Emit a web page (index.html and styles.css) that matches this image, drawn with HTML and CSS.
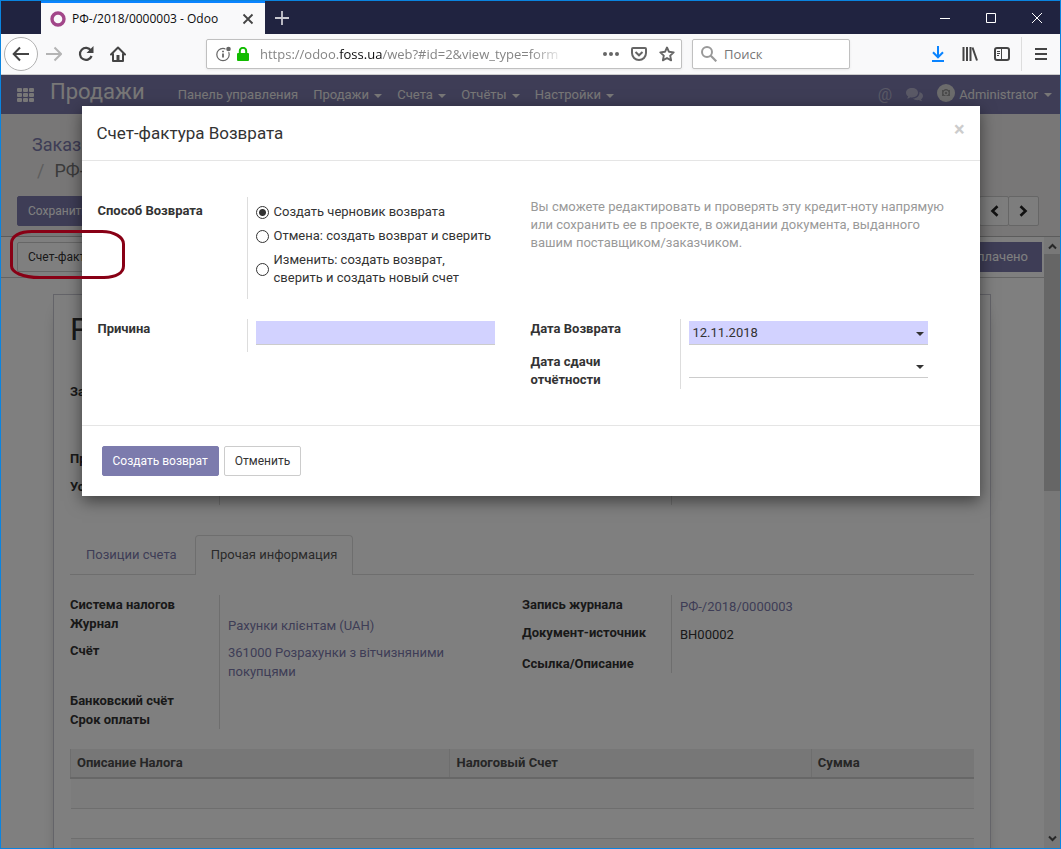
FILE: index.html
```html
<!DOCTYPE html>
<html lang="ru">
<head>
<meta charset="utf-8">
<title>РФ-/2018/0000003 - Odoo</title>
<link rel="stylesheet" href="styles.css">
</head>
<body>
<div class="window">
  <header class="titlebar">
    <div class="tab">
      <svg width="16" height="16" viewBox="0 0 16 16"><circle cx="8" cy="8" r="6" fill="none" stroke="#a24689" stroke-width="3.4"/></svg>
      <span class="tab-title">РФ-/2018/0000003 - Odoo</span>
      <button class="icon-btn" aria-label="Закрыть вкладку"><svg width="12" height="12" viewBox="0 0 12 12"><path d="M1.5 1.5l9 9M10.5 1.5l-9 9" stroke="#444" stroke-width="1.8"/></svg></button>
    </div>
    <button class="icon-btn new-tab" aria-label="Новая вкладка"><svg width="14" height="14" viewBox="0 0 14 14"><path d="M7 0v14M0 7h14" stroke="#c8c8d0" stroke-width="1.8"/></svg></button>
    <div class="win-controls">
      <button class="icon-btn" aria-label="Свернуть"><svg width="10" height="10"><path d="M0 5.5h10" stroke="#fff"/></svg></button>
      <button class="icon-btn" aria-label="Развернуть"><svg width="10" height="10"><path d="M.5.5h9v9h-9z" fill="none" stroke="#fff"/></svg></button>
      <button class="icon-btn" aria-label="Закрыть"><svg width="10" height="10"><path d="M0 0l10 10M10 0L0 10" stroke="#fff"/></svg></button>
    </div>
  </header>

  <div class="toolbar">
    <div class="history">
      <button class="icon-btn back" aria-label="Назад"><svg width="18" height="16" viewBox="0 0 18 16"><path d="M17 8H2M8 1.5L1.7 8 8 14.5" fill="none" stroke="#444" stroke-width="2"/></svg></button>
      <button class="icon-btn" aria-label="Вперёд"><svg width="16" height="16" viewBox="0 0 16 16"><path d="M0 8h14M8.5 1.5L15 8l-6.500 6.500" fill="none" stroke="#b4b4b4" stroke-width="2"/></svg></button>
      <button class="icon-btn" aria-label="Обновить"><svg width="16" height="16" viewBox="0 0 16 16"><path d="M13 4.600A6 6 0 1 0 13.600 10" fill="none" stroke="#444" stroke-width="2.200"/><path d="M15.500 0v7H8.500z" fill="#444"/></svg></button>
      <button class="icon-btn" aria-label="Домой"><svg width="16" height="16" viewBox="0 0 16 16"><path d="M1 8.500L8 1.500l7 7M3 7.500V15h10V7.500" fill="none" stroke="#444" stroke-width="2" stroke-linejoin="round" stroke-linecap="round"/><path d="M6.500 9h3v6h-3z" fill="#444"/></svg></button>
    </div>
    <div class="urlbar">
      <svg width="17" height="16" viewBox="0 0 17 16"><circle cx="7" cy="8.500" r="6.200" fill="none" stroke="#666" stroke-width="1.200"/><path d="M7 7.500v4M7 4.700v1.600" stroke="#666" stroke-width="1.800"/><circle cx="12.500" cy="3" r="3.200" fill="#fff"/><circle cx="12.500" cy="3" r="2.300" fill="#666"/></svg>
      <svg width="12" height="14" viewBox="0 0 12 14"><path d="M2.800 7V4a3.200 3.200 0 0 1 6.400 0v3" fill="none" stroke="#12bc00" stroke-width="2"/><rect y="6" width="12" height="8" rx="1" fill="#12bc00"/></svg>
      <div class="url">https://odoo.<b>foss.ua</b>/web?#id=2&amp;view_type=form</div>
      <svg width="16" height="4" viewBox="0 0 16 4"><circle cx="2" cy="2" r="2" fill="#666"/><circle cx="8" cy="2" r="2" fill="#666"/><circle cx="14" cy="2" r="2" fill="#666"/></svg>
      <svg width="16" height="14" viewBox="0 0 16 14"><path d="M2 1h12a1 1 0 0 1 1 1v4a7 7 0 0 1-14 0V2a1 1 0 0 1 1-1z" fill="none" stroke="#666" stroke-width="2"/><path d="M4.500 5L8 8.300 11.500 5" fill="none" stroke="#666" stroke-width="2"/></svg>
      <svg width="16" height="16" viewBox="0 0 16 16"><path d="M8 1.500l2 4.300 4.700.6-3.500 3.200.9 4.700L8 12l-4.100 2.300.9-4.700L1.300 6.400 6 5.800z" fill="none" stroke="#666" stroke-width="1.900" stroke-linejoin="round"/></svg>
    </div>
    <label class="search">
      <svg width="16" height="16" viewBox="0 0 16 16"><circle cx="6" cy="6" r="5" fill="none" stroke="#999" stroke-width="2"/><path d="M9.800 9.800l5.500 5.500" stroke="#999" stroke-width="2.200"/></svg>
      <input type="text" placeholder="Поиск" aria-label="Поиск">
    </label>
    <div class="tools">
      <button class="icon-btn" aria-label="Загрузки"><svg width="12" height="16" viewBox="0 0 12 16"><path d="M6 0v11M1 6.300l5 5 5-5M0 15h12" fill="none" stroke="#0a84ff" stroke-width="2"/></svg></button>
      <button class="icon-btn" aria-label="Библиотека"><svg width="16" height="14" viewBox="0 0 16 14"><path d="M1.500 0v14M5 0v14M8.500 0v14" stroke="#444" stroke-width="2"/><path d="M10.500.5L15 13.500" stroke="#444" stroke-width="2"/></svg></button>
      <button class="icon-btn" aria-label="Боковая панель"><svg width="16" height="14" viewBox="0 0 16 14"><rect x="1" y="1" width="14" height="12" rx="2" fill="none" stroke="#444" stroke-width="2"/><path d="M7.500 1v12" stroke="#444"/><path d="M3 4.500h3M3 6.500h3M3 8.500h2" stroke="#444"/></svg></button>
      <button class="icon-btn menu" aria-label="Меню"><svg width="12" height="12" viewBox="0 0 12 12"><path d="M0 1h12M0 6h12M0 11h12" stroke="#444" stroke-width="2"/></svg></button>
    </div>
  </div>

  <div class="app">
    <nav class="navbar">
      <button class="icon-btn apps" aria-label="Приложения"><svg width="17" height="14" viewBox="0 0 17 14"><g fill="#f0eeee"><rect width="5" height="4" rx="1"/><rect x="6" width="5" height="4" rx="1"/><rect x="12" width="5" height="4" rx="1"/><rect y="5" width="5" height="4" rx="1"/><rect x="6" y="5" width="5" height="4" rx="1"/><rect x="12" y="5" width="5" height="4" rx="1"/><rect y="10" width="5" height="4" rx="1"/><rect x="6" y="10" width="5" height="4" rx="1"/><rect x="12" y="10" width="5" height="4" rx="1"/></g></svg></button>
      <span class="brand">Продажи</span>
      <div class="menu-links">
        <a href="#">Панель управления</a>
        <a href="#">Продажи <i class="caret"></i></a>
        <a href="#">Счета <i class="caret"></i></a>
        <a href="#">Отчёты <i class="caret"></i></a>
        <a href="#">Настройки <i class="caret"></i></a>
      </div>
      <div class="systray">
        <a href="#" class="at">@</a>
        <a href="#" aria-label="Беседы"><svg width="17" height="14" viewBox="0 0 17 14"><path d="M6 0c3.500 0 6 2 6 4.700S9.500 9.400 6 9.400c-.6 0-1.200 0-1.700-.2-.9.800-2 1.200-3.300 1.300.6-.6 1-1.200 1.200-2.200C.8 7.500 0 6.200 0 4.700 0 2 2.600 0 6 0z" fill="#b4b3cc"/><path d="M13.500 4c2 .7 3.500 2.200 3.500 4 0 1.300-.8 2.500-2 3.300.2.900.6 1.400 1.200 2-1.400-.1-2.400-.5-3.300-1.200-2.200.4-4.600-.2-5.900-1.500 3.700-.2 6.800-2.600 6.500-6.600z" fill="#b4b3cc"/></svg></a>
        <a href="#" class="user"><svg width="18" height="18" viewBox="0 0 18 18"><circle cx="9" cy="9" r="9" fill="#d8d8d8"/><path d="M5 6h2l.8-1h2.400L11 6h2v6H5z" fill="#999"/><circle cx="9" cy="9" r="2" fill="#999" stroke="#eee"/></svg>Administrator <i class="caret"></i></a>
      </div>
    </nav>

    <section class="control-panel">
      <ol class="breadcrumb"><li><a href="#">Заказы</a></li><li class="current">РФ-/2018/0000003</li></ol>
      <div class="cp-row">
        <button class="btn primary">Сохранить</button>
        <div class="pager">
          <button class="btn" aria-label="Предыдущая"><svg width="9" height="12" viewBox="0 0 9 12"><path d="M7.500 1.300L2.500 6l5 4.700" fill="none" stroke="#222" stroke-width="2.600"/></svg></button>
          <button class="btn" aria-label="Следующая"><svg width="9" height="12" viewBox="0 0 9 12"><path d="M1.500 1.300l5 4.700-5 4.700" fill="none" stroke="#222" stroke-width="2.600"/></svg></button>
        </div>
      </div>
    </section>

    <div class="content">
      <main class="form-view">
        <div class="statusbar">
          <button class="btn">Счет-фактура Возврата</button>
          <span class="status">Оплачено</span>
        </div>
        <article class="sheet">
          <h1>РФ-/2018/0000003</h1>
          <div class="columns head">
            <dl class="group"><dt class="tall">Заказчик</dt><dd></dd><dt class="mid">Примечание</dt><dd></dd><dt>Условия</dt><dd></dd></dl>
            <dl class="group"><dt></dt><dd></dd></dl>
          </div>
          <div class="tabs"><a href="#">Позиции счета</a><a href="#" class="active">Прочая информация</a></div>
          <div class="columns">
            <dl class="group info-left">
              <dt>Система налогов</dt><dd></dd>
              <dt>Журнал</dt><dd><a href="#">Рахунки клієнтам (UAH)</a></dd>
              <dt>Счёт</dt><dd><a href="#">361000 Розрахунки з вітчизняними покупцями</a></dd>
              <dt>Банковский счёт</dt><dd></dd>
              <dt>Срок оплаты</dt><dd></dd>
            </dl>
            <dl class="group info-right">
              <dt>Запись журнала</dt><dd><a href="#">РФ-/2018/0000003</a></dd>
              <dt>Документ-источник</dt><dd>ВН00002</dd>
              <dt>Ссылка/Описание</dt><dd></dd>
            </dl>
          </div>
          <table class="taxes">
            <thead><tr><th class="c-name">Описание Налога</th><th class="c-account">Налоговый Счет</th><th>Сумма</th></tr></thead>
            <tbody><tr><td></td><td></td><td></td></tr><tr><td></td><td></td><td></td></tr><tr><td></td><td></td><td></td></tr></tbody>
          </table>
        </article>
      </main>
      <div class="scrollbar">
        <svg width="9" height="7" viewBox="0 0 9 7"><path d="M1 5.500l3.500-3.500L8 5.500" fill="none" stroke="#505050" stroke-width="2"/></svg>
        <div class="thumb"></div>
        <svg width="9" height="7" viewBox="0 0 9 7"><path d="M1 1.500L4.500 5 8 1.500" fill="none" stroke="#505050" stroke-width="2"/></svg>
      </div>
    </div>

    <div class="backdrop">
      <form class="modal" role="dialog" aria-labelledby="dialog-title">
        <div class="modal-header">
          <h2 id="dialog-title">Счет-фактура Возврата</h2>
          <button type="button" class="close" aria-label="Закрыть">×</button>
        </div>
        <div class="modal-body">
          <div class="field method">
            <span class="label" id="method-label">Способ Возврата</span>
            <div class="options" role="radiogroup" aria-labelledby="method-label">
              <label><input type="radio" name="m" checked><span>Создать черновик возврата</span></label>
              <label><input type="radio" name="m"><span>Отмена: создать возврат и сверить</span></label>
              <label><input type="radio" name="m"><span>Изменить: создать возврат, сверить и создать новый счет</span></label>
            </div>
          </div>
          <p class="help">Вы сможете редактировать и проверять эту кредит-ноту напрямую или сохранить ее в проекте, в ожидании документа, выданного вашим поставщиком/заказчиком.</p>
          <div class="field">
            <label class="label" for="reason">Причина</label>
            <div class="value"><input class="text required" id="reason" type="text"></div>
          </div>
          <div class="dates">
            <div class="field">
              <label class="label" for="date1">Дата Возврата</label>
              <div class="value"><input class="text required" id="date1" type="text" value="12.11.2018"><i class="caret"></i></div>
            </div>
            <div class="field">
              <label class="label" for="date2">Дата сдачи отчётности</label>
              <div class="value"><input class="text" id="date2" type="text"><i class="caret"></i></div>
            </div>
          </div>
        </div>
        <div class="modal-footer">
          <button type="button" class="btn primary">Создать возврат</button>
          <button type="button" class="btn">Отменить</button>
        </div>
      </form>
    </div>
  </div>
  <svg class="marker" width="116" height="52" viewBox="0 0 116 52"><path d="M22 2.500H92C104 2.500 113.500 8 113.500 15V37C113.500 44 106 48 94 48.500H30C12 48.500 1.500 43 1.500 37V14C1.500 7 10 2.500 22 2.500Z" fill="none" stroke="#880015" stroke-width="3"/></svg>
</div>
</body>
</html>
```
FILE: styles.css
```css
* { box-sizing: border-box; }
body { margin: 0; font: 13px/19px Roboto, "Liberation Sans", sans-serif; color: #333; }
a { color: #7c7bad; text-decoration: none; }
button, input { font: inherit; color: inherit; }
svg { display: block; flex: none; }
h1, h2, p, dl, dd, ol { margin: 0; padding: 0; font-weight: 400; }

.window {
  position: relative;
  display: flex;
  flex-direction: column;
  height: 100vh;
  border: 1px solid #0a84e0;
  overflow: hidden;
}
.icon-btn { display: flex; align-items: center; justify-content: center; padding: 0; border: 0; background: none; }

/* Browser chrome */
.titlebar { display: flex; flex: none; align-items: stretch; height: 33px; padding-left: 40px; background: #202340; font-family: "Open Sans", sans-serif; }
.tab { display: flex; align-items: center; gap: 6px; width: 224px; padding: 0 11px 0 9px; background: #f9f9fa; border-top: 2px solid #0a84ff; color: #0c0c0d; font-size: 12px; }
.tab-title { flex: 1; white-space: nowrap; }
.new-tab { width: 34px; }
.win-controls { display: flex; margin-left: auto; }
.win-controls .icon-btn { width: 46px; }

.toolbar { display: flex; flex: none; align-items: center; height: 41px; background: #f9f9fa; border-bottom: 1px solid #ccc; font-family: "Open Sans", sans-serif; font-size: 13px; }
.history { display: flex; flex: none; align-items: center; gap: 16px; width: 205px; padding-left: 3px; }
.history .back { width: 34px; height: 34px; margin-right: -8px; border: 1px solid #b1b1b1; border-radius: 50%; background: #fff; }
.urlbar, .search { display: flex; align-items: center; height: 30px; border: 1px solid #c0c0c0; border-radius: 2px; background: #fff; box-shadow: 0 1px 3px #0001; }
.urlbar { flex: 1; min-width: 0; gap: 12px; padding: 0 6px 0 9px; }
.urlbar svg:nth-child(2) { margin-left: -8px; }
.url { flex: 1; min-width: 0; margin-left: -1px; overflow: hidden; white-space: nowrap; color: #858585; -webkit-mask-image: linear-gradient(90deg, #000 82%, transparent 92%); mask-image: linear-gradient(90deg, #000 82%, transparent 92%); }
.url b { font-weight: 400; color: #0c0c0d; }
.search { flex: none; width: 158px; gap: 7px; margin-left: 10px; padding: 0 8px; }
.search input { flex: 1; min-width: 0; padding: 0; border: 0; outline: 0; background: none; }
.search input::placeholder { color: #777; opacity: 1; }
.tools { display: flex; flex: none; align-items: center; justify-content: flex-end; width: 210px; }
.tools .icon-btn { width: 32px; height: 34px; }
.tools .menu { width: 39px; margin-left: 3px; border-left: 1px solid #ddd; }

/* Application */
.app { position: relative; display: flex; flex: 1; flex-direction: column; min-height: 0; }
.caret { display: inline-block; margin-left: 2px; border: 4px solid transparent; border-top-color: currentColor; border-bottom: 0; vertical-align: 1px; }

.navbar { display: flex; flex: none; align-items: center; height: 39px; padding: 0 8px 0 16px; background: #7c7bad; color: #f0eeee; }
.navbar a { color: inherit; white-space: nowrap; }
.brand { margin: 0 33px 6px 16px; font-size: 22px; line-height: 28px; }
.menu-links { display: flex; gap: 15px; }
.systray { display: flex; align-items: center; gap: 14px; margin-left: auto; }
.systray .at { color: #b4b3cc; font-size: 16px; }
.user { display: flex; align-items: center; gap: 4px; }
.user svg { margin-bottom: 4px; }

.control-panel { flex: none; padding: 18px 21px 10px 16px; background: #f0eeee; border-bottom: 1px solid #b8b8b8; }
.breadcrumb { padding: 0 15px; list-style: none; font-size: 18px; line-height: 26px; }
.breadcrumb .current { color: #777; }
.breadcrumb .current::before { content: "/"; padding: 0 10px 0 5px; color: #bbb; }
.cp-row { display: flex; justify-content: space-between; margin-top: 12px; }
.btn { display: inline-flex; align-items: center; justify-content: center; height: 30px; padding: 0 10px; border: 1px solid #ccc; border-radius: 2px; background: #fff; font-size: 12px; white-space: nowrap; }
.btn.primary { border-color: #7c7bad; background: #7c7bad; color: #fff; }
.pager { display: flex; }
.pager .btn { width: 30px; padding: 0; background: #fafafa; }
.pager .btn + .btn { margin-left: -1px; width: 31px; }

.content { display: flex; flex: 1; min-height: 0; }
.form-view { flex: 1; min-width: 0; overflow: hidden; background: #fff; }
.statusbar { display: flex; align-items: center; justify-content: space-between; height: 41px; padding: 0 2px 0 16px; border-bottom: 1px solid #c8c8c8; }
.status { padding: 5px 14px 6px; background: #7c7bad; color: #fff; }
.sheet { min-height: 640px; margin: 16px 53px 0 52px; padding: 16px; border: 1px solid #c8c8d3; box-shadow: 0 5px 20px -15px #000; color: #333; }
.sheet h1 { font-size: 32px; line-height: 37px; }
.columns { display: grid; grid-template-columns: 1fr 1fr; align-items: start; }
.columns.head { padding: 34px 0 30px; }
.head .group { height: 123px; }
.group { display: grid; grid-template-columns: 150px 1fr; align-content: start; background: linear-gradient(#ddd, #ddd) 149px 0 / 1px 100% no-repeat; }
.group dt { font-weight: 700; }
.group dd { padding: 2px 36px 0 8px; }
.head .tall { height: 67px; }
.head .mid { height: 28px; }
.info-left { grid-template-rows: 19px 27px 50px 19px 19px; }
.info-right { grid-template-rows: 28px 31px 19px; }
.tabs { display: flex; gap: 2px; margin-bottom: 20px; border-bottom: 1px solid #ddd; }
.tabs a { margin-bottom: -1px; padding: 9px 15px 11px; border: 1px solid transparent; border-bottom: 0; }
.tabs .active { border-color: #ddd; border-radius: 4px 4px 0 0; background: #fff; color: #555; }
.taxes { width: 100%; margin-top: 20px; border-collapse: collapse; table-layout: fixed; }
.taxes th { height: 29px; padding: 0 6px 1px; border-left: 1px solid #ddd; border-bottom: 2px solid #cfcfcf; background: #eee; color: #4c4c4c; text-align: left; }
.c-name { width: 42%; }
.c-account { width: 40%; }
.taxes td { height: 30px; padding: 0; border-bottom: 1px solid #ddd; }
.taxes tbody tr:nth-child(odd) { background: #f9f9f9; }

.scrollbar { display: flex; flex: none; flex-direction: column; align-items: center; justify-content: space-between; width: 16px; padding: 6px 0; background: #f0f0f0; }
.thumb { width: 16px; height: 237px; margin: 4px 0 auto; background: #cdcdcd; }

/* Dialog */
.backdrop { position: absolute; inset: 0; padding: 31px 20px; background: rgba(0, 0, 0, .5); }
.modal { max-width: 898px; margin: 0 auto; background: #fff; box-shadow: 0 5px 15px rgba(0, 0, 0, .5); line-height: 18px; }
.modal-header { display: flex; align-items: center; justify-content: space-between; height: 55px; padding: 0 15px; border-bottom: 1px solid #e5e5e5; }
.modal-header h2 { font-size: 17px; line-height: 24px; }
.close { padding: 0 0 8px; border: 0; background: none; color: #ccc; font-size: 20px; font-weight: 700; line-height: 20px; }
.modal-body { display: grid; grid-template-columns: 1fr 1fr; align-items: start; row-gap: 20px; padding: 36px 16px; }
.field { display: flex; align-items: stretch; }
.label { flex: none; width: 150px; padding: 1px 40px 14px 0; border-right: 1px solid #ddd; font-weight: 700; }
.method .label { padding-top: 5px; padding-right: 0; }
.options { display: flex; flex: 1; flex-direction: column; gap: 6px; padding: 6px 20px 12px 8px; }
.options label { display: flex; align-items: center; gap: 5px; }
.options label span { max-width: 220px; }
.options input { appearance: none; flex: none; width: 13px; height: 13px; margin: 0; border: 1px solid #333; border-radius: 50%; background: #fff; }
.options input:checked { background: radial-gradient(circle, #333 3px, #fff 4px); }
.help { padding: 1px 15px 0 0; color: #999; }
.value { position: relative; flex: 1; padding: 2px 36px 0 8px; }
.value .caret { position: absolute; top: 13px; right: 40px; }
.text { display: block; width: 100%; height: 24px; padding: 0 4px; border: 0; border-bottom: 1px solid #ccc; outline: 0; background: #fff; }
.text.required { background: #d2d2ff; }
.dates .field + .field .label { padding-bottom: 0; }
.modal-footer { display: flex; gap: 5px; padding: 20px; border-top: 1px solid #e5e5e5; }

.marker { position: absolute; left: 9px; top: 228px; }
```
